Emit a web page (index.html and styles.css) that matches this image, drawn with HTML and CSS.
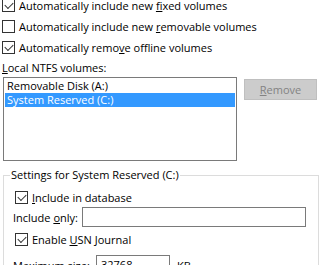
FILE: index.html
```html
<!doctype html>
<html>
<head>
<meta charset="utf-8">
<title>Volume settings</title>
<link rel="stylesheet" href="styles.css">
</head>
<body>
<div class="page">
	<div class="chk"><span class="box on"></span><span>Automatically include new <u>f</u>ixed volumes</span></div>
	<div class="chk"><span class="box"></span><span>Automatically include new <u>r</u>emovable volumes</span></div>
	<div class="chk"><span class="box on"></span><span>Automatically remo<u>v</u>e offline volumes</span></div>
	<div class="lbl"><u>L</u>ocal NTFS volumes:</div>
	<div class="vols">
		<ul class="list">
			<li>Removable Disk (A:)</li>
			<li class="sel">System Reserved (C:)</li>
		</ul>
		<button class="btn" disabled><u>R</u>emove</button>
	</div>
	<fieldset class="group">
		<legend>Settings for System Reserved (C:)</legend>
		<div class="chk c1"><span class="box on"></span><span><u>I</u>nclude in database</span></div>
		<div class="field f1"><span class="flbl">Include <u>o</u>nly:</span><span class="inp wide"></span></div>
		<div class="chk c2"><span class="box on"></span><span>Enable <u>U</u>SN Journal</span></div>
		<div class="field f2"><span class="flbl2">Ma<u>x</u>imum size:</span><span class="inp num">32768</span><span class="unit">KB</span></div>
	</fieldset>
</div>
</body>
</html>
```
FILE: styles.css
```css
body{margin:0;background:#fff;font-family:"Open Sans","Noto Sans",sans-serif;font-size:11px;color:#000;overflow:hidden;}
.page{margin-top:-5px;padding-left:2px;}
.chk{display:flex;align-items:center;height:21px;gap:4px;}
.box{width:13px;height:13px;box-sizing:border-box;border:1px solid #333;background:#fff;flex:none;position:relative;}
.box.on::after{content:"";position:absolute;left:2px;top:0px;width:7px;height:4px;border-left:1px solid #333;border-bottom:1px solid #333;transform:translate(0,2px) rotate(-45deg);transform-origin:50% 50%;}
.lbl{height:19px;line-height:19px;}
.vols{display:flex;align-items:flex-start;padding-left:1px;}
.list{margin:0;padding:1px;list-style:none;width:234px;height:84px;box-sizing:border-box;border:1px solid #7a7a7a;}
.list li{height:14px;line-height:14px;padding-left:2px;}
.list .sel{background:#3399ff;color:#fff;}
.btn{margin:2px 0 0 7px;width:73px;height:21px;padding:0;background:#ccc;border:1px solid #bfbfbf;color:#838383;font:inherit;}
.group{margin:7px 6px 0 1px;padding:5px 10px 0 11px;border:1px solid #dcdcdc;}
.group legend{padding:0 1px;margin-left:-5px;line-height:14px;}
.c1{height:20px;}
.c2{height:25px;}
.field{display:flex;align-items:center;}
.f1{height:20px;}
.f2{height:26px;}
.flbl{width:69px;margin-left:-2px;flex:none;}
.flbl2{width:83px;margin-left:-2px;flex:none;}
.inp{height:20px;box-sizing:border-box;border:1px solid #7a7a7a;line-height:18px;padding-left:4px;}
.wide{width:224px;}
.num{width:74px;}
.unit{margin-left:7px;}
```
